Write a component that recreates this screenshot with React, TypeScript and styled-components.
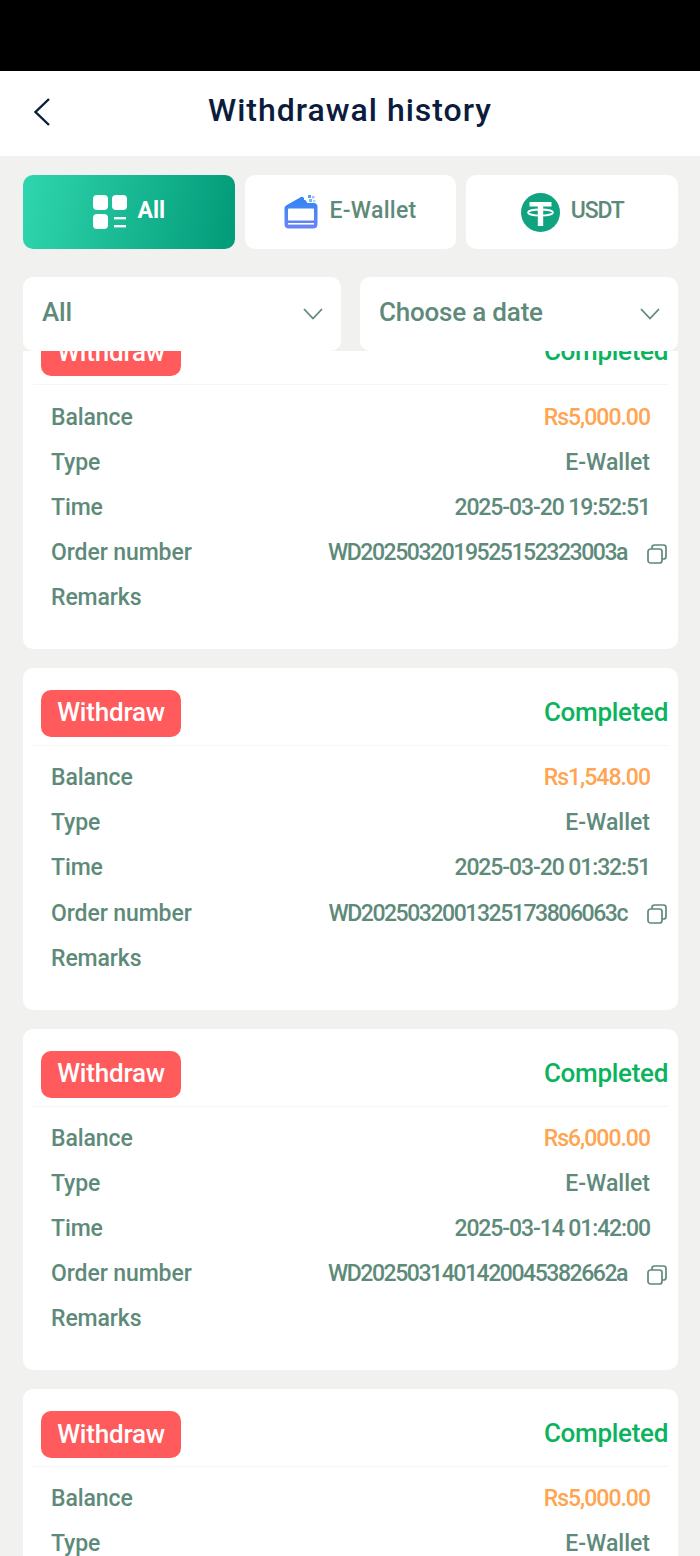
import React from "react";
import styled, { createGlobalStyle } from "styled-components";

const GlobalStyle = createGlobalStyle`
    html, body {
        margin: 0;
        padding: 0;
        height: 1556px;
        overflow: hidden;
        background: #f1f1ef;
        font-family: "Roboto", "Liberation Sans", sans-serif;
    }
`;

type Order = {
    balance: string;
    type: string;
    time: string;
    order: string;
};

const orders: Order[] = [
    { balance: "Rs5,000.00", type: "E-Wallet", time: "2025-03-20 19:52:51", order: "WD2025032019525152323003a" },
    { balance: "Rs1,548.00", type: "E-Wallet", time: "2025-03-20 01:32:51", order: "WD2025032001325173806063c" },
    { balance: "Rs6,000.00", type: "E-Wallet", time: "2025-03-14 01:42:00", order: "WD2025031401420045382662a" },
    { balance: "Rs5,000.00", type: "E-Wallet", time: "2025-03-10 18:20:14", order: "WD2025031018201445120981b" },
];

const GridIcon = () => (
    <svg width="34" height="34" viewBox="0 0 34 34" fill="#fff">
        <rect x="0" y="0" width="15" height="15" rx="4" />
        <rect x="19" y="0" width="15" height="15" rx="4" />
        <rect x="0" y="19" width="15" height="15" rx="4" />
        <rect x="21" y="22" width="12" height="2.4" />
        <rect x="21" y="30" width="12" height="2.4" />
    </svg>
);

const WalletIcon = () => (
    <svg width="34" height="34" viewBox="0 0 34 34">
        <defs>
            <linearGradient id="wallet" x1="0" y1="0" x2="0" y2="1">
                <stop offset="0" stopColor="#2f86f2" />
                <stop offset="1" stopColor="#6a84f8" />
            </linearGradient>
        </defs>
        <path d="M0.5 13 Q0.5 11.5 2 10.5 L17 2 Q18.5 1.2 19.5 2.5 L23.5 8 H29.5 Q33.5 8 33.5 12 V29 Q33.5 33.5 29 33.5 H5 Q0.5 33.5 0.5 29 Z" fill="url(#wallet)" />
        <rect x="4" y="13.5" width="26" height="12" rx="0.8" fill="#fff" />
        <rect x="4" y="28" width="26" height="1.6" fill="#fff" />
        <rect x="20" y="2" width="3" height="3" fill="#fff" />
        <rect x="24" y="0" width="3" height="3" fill="#5b9bf2" />
        <rect x="28" y="1" width="2.4" height="2.4" fill="#9cc0f7" />
        <rect x="25" y="4" width="3" height="3" fill="#7fb0f5" />
        <rect x="29" y="5" width="2.4" height="2.4" fill="#b6d0fa" />
    </svg>
);

const TetherIcon = () => (
    <svg width="39" height="39" viewBox="0 0 39 39">
        <circle cx="19.5" cy="19.5" r="19.5" fill="#0fa37f" />
        <path d="M8.5 9 H30.5 V13.5 H22.2 V33 H16.8 V13.5 H8.5 Z" fill="#fff" />
        <ellipse cx="19.5" cy="19.5" rx="12.5" ry="3" fill="none" stroke="#fff" strokeWidth="1.8" />
    </svg>
);

const Chevron = () => (
    <svg width="22" height="14" viewBox="0 0 22 14" fill="none" stroke="#5e8a7a" strokeWidth="1.8">
        <path d="M2 2 L11 11.5 L20 2" />
    </svg>
);

const CopyIcon = () => (
    <svg width="20" height="20" viewBox="0 0 20 20" fill="none" stroke="#5e8a7a" strokeWidth="1.7">
        <rect x="1" y="5" width="14" height="14" rx="2.5" />
        <path d="M5 5 V3.5 Q5 1 7.5 1 H16.5 Q19 1 19 3.5 V12.5 Q19 15 16.5 15 H15" />
    </svg>
);

export default function App() {
    return (
        <Page>
            <GlobalStyle />
            <StatusBar />
            <Header>
                <BackButton>
                    <svg width="20" height="30" viewBox="0 0 20 30" fill="none" stroke="#0b1c3d" strokeWidth="2.4">
                        <path d="M17 2 L3.5 15 L17 28" />
                    </svg>
                </BackButton>
                <Title>Withdrawal history</Title>
            </Header>
            <Tabs>
                <Tab $active>
                    <GridIcon />
                    <TabLabel $active>All</TabLabel>
                </Tab>
                <Tab>
                    <WalletIcon />
                    <TabLabel>E-Wallet</TabLabel>
                </Tab>
                <Tab>
                    <TetherIcon />
                    <UsdtLabel>USDT</UsdtLabel>
                </Tab>
            </Tabs>
            <Filters>
                <Filter>
                    <FilterText>All</FilterText>
                    <Chevron />
                </Filter>
                <Filter>
                    <FilterText>Choose a date</FilterText>
                    <Chevron />
                </Filter>
            </Filters>
            <List>
                <ScrolledContent>
                    {orders.map(item => (
                        <Card key={item.order}>
                            <CardHead>
                                <Badge>Withdraw</Badge>
                                <Status>Completed</Status>
                            </CardHead>
                            <Rows>
                                <Row>
                                    <Label>Balance</Label>
                                    <Amount>{item.balance}</Amount>
                                </Row>
                                <Row>
                                    <Label>Type</Label>
                                    <Value>{item.type}</Value>
                                </Row>
                                <Row>
                                    <Label>Time</Label>
                                    <TimeValue>{item.time}</TimeValue>
                                </Row>
                                <Row>
                                    <Label>Order number</Label>
                                    <OrderCell>
                                        <OrderValue>{item.order}</OrderValue>
                                        <CopyIcon />
                                    </OrderCell>
                                </Row>
                                <Row>
                                    <Label>Remarks</Label>
                                </Row>
                            </Rows>
                        </Card>
                    ))}
                </ScrolledContent>
            </List>
        </Page>
    );
}

const Page = styled.div`
    width: 700px;
    height: 1556px;
    display: flex;
    flex-direction: column;
    overflow: hidden;
    background: #f1f1ef;
`;

const StatusBar = styled.div`
    height: 71px;
    flex: none;
    background: #000;
`;

const Header = styled.header`
    position: relative;
    height: 85px;
    flex: none;
    display: flex;
    align-items: center;
    justify-content: center;
    padding-bottom: 7px;
    box-sizing: border-box;
    background: #fff;
`;

const BackButton = styled.div`
    position: absolute;
    left: 32px;
    top: 26px;
    line-height: 0;
`;

const Title = styled.h1`
    margin: 0;
    font-size: 32px;
    font-weight: 500;
    letter-spacing: 1px;
    color: #0b1c3d;
`;

const Tabs = styled.div`
    flex: none;
    display: grid;
    grid-template-columns: repeat(3, 1fr);
    gap: 10px;
    padding: 19px 22px 0 23px;
`;

const Tab = styled.div<{ $active?: boolean }>`
    height: 74px;
    display: flex;
    align-items: center;
    justify-content: center;
    gap: 11px;
    border-radius: 10px;
    background: ${p => (p.$active ? "linear-gradient(100deg, #2fd6ae, #029a78)" : "#fff")};
`;

const TabLabel = styled.span<{ $active?: boolean }>`
    margin-top: -3px;
    font-size: 23px;
    font-weight: ${p => (p.$active ? 700 : 500)};
    letter-spacing: ${p => (p.$active ? 0 : 0.3)}px;
    color: ${p => (p.$active ? "#fff" : "#5e8a7a")};
`;

const UsdtLabel = styled(TabLabel)`
    letter-spacing: -1.2px;
`;

const Filters = styled.div`
    flex: none;
    display: grid;
    grid-template-columns: repeat(2, 318px);
    gap: 19px;
    padding: 28px 0 0 23px;
`;

const Filter = styled.div`
    height: 74px;
    display: flex;
    align-items: center;
    justify-content: space-between;
    padding: 0 17px 0 19px;
    box-sizing: border-box;
    border-radius: 10px;
    background: #fff;
`;

const FilterText = styled.span`
    margin-top: -4px;
    font-size: 26px;
    font-weight: 500;
    letter-spacing: -0.2px;
    color: #5e8a7a;
`;

const List = styled.div`
    flex: 1;
    min-height: 0;
    overflow: hidden;
`;

const ScrolledContent = styled.div`
    margin-top: -43.6px;
    padding: 0 22px 0 23px;
    display: flex;
    flex-direction: column;
    gap: 18.9px;
`;

const Card = styled.div`
    height: 341.7px;
    flex: none;
    box-sizing: border-box;
    padding: 0 10px;
    border-radius: 10px;
    background: #fff;
`;

const CardHead = styled.div`
    height: 78px;
    display: flex;
    align-items: center;
    justify-content: space-between;
    padding: 14px 0 0 8px;
    box-sizing: border-box;
    border-bottom: 1px solid #f6f6f4;
`;

const Badge = styled.span`
    width: 140px;
    height: 47px;
    padding-bottom: 2px;
    box-sizing: border-box;
    display: flex;
    align-items: center;
    justify-content: center;
    border-radius: 10px;
    background: #ff5a5c;
    color: #fff;
    font-size: 26px;
    font-weight: 500;
    letter-spacing: -0.2px;
`;

const Status = styled.span`
    margin-top: -3px;
    font-size: 26px;
    font-weight: 500;
    letter-spacing: -0.3px;
    color: #0bb35e;
`;

const Rows = styled.div`
    display: flex;
    flex-direction: column;
    padding: 9px 18px 0 18px;
`;

const Row = styled.div`
    height: 45.2px;
    display: flex;
    align-items: center;
    justify-content: space-between;
    font-size: 23px;
    font-weight: 500;
    color: #5e8a7a;
`;

const Label = styled.span`
    letter-spacing: -0.1px;
`;

const Value = styled.span`
    letter-spacing: 0;
`;

const TimeValue = styled.span`
    letter-spacing: -1.1px;
`;

const OrderValue = styled.span`
    letter-spacing: -1.45px;
`;

const OrderCell = styled.span`
    display: flex;
    align-items: center;
    gap: 20px;
    margin-right: -18px;
    svg {
        margin: 2px 1px 0 0;
    }
`;

const Amount = styled.span`
    letter-spacing: -1px;
    color: #ffa552;
`;
